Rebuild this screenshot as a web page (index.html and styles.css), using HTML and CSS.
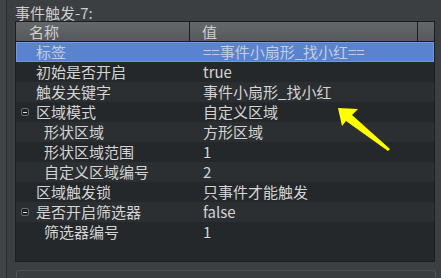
FILE: index.html
```html
<!DOCTYPE html>
<html lang="zh-CN">

<head>
    <meta charset="UTF-8">
    <title>属性</title>
    <link rel="stylesheet" href="styles.css">
</head>

<body>
    <div class="page">
        <div class="edge"></div>
        <div class="main">
            <div class="group_title">事件触发-7:</div>
            <div class="grid">
                <div class="head">
                    <div class="hc name">名称</div>
                    <div class="hc value">值</div>
                    <div class="hc spare"></div>
                </div>
                <div class="row selected">
                    <div class="cell name">标签</div>
                    <div class="cell value">==事件小扇形_找小红==</div>
                </div>
                <div class="row dark">
                    <div class="cell name">初始是否开启</div>
                    <div class="cell value">true</div>
                </div>
                <div class="row light">
                    <div class="cell name">触发关键字</div>
                    <div class="cell value">事件小扇形_找小红</div>
                </div>
                <div class="row dark">
                    <div class="cell name branch"><span class="minus"></span>区域模式</div>
                    <div class="cell value">自定义区域</div>
                </div>
                <div class="row light">
                    <div class="cell name child">形状区域</div>
                    <div class="cell value">方形区域</div>
                </div>
                <div class="row dark">
                    <div class="cell name child">形状区域范围</div>
                    <div class="cell value">1</div>
                </div>
                <div class="row light">
                    <div class="cell name child">自定义区域编号</div>
                    <div class="cell value">2</div>
                </div>
                <div class="row dark">
                    <div class="cell name">区域触发锁</div>
                    <div class="cell value">只事件才能触发</div>
                </div>
                <div class="row light">
                    <div class="cell name branch"><span class="minus"></span>是否开启筛选器</div>
                    <div class="cell value">false</div>
                </div>
                <div class="row dark">
                    <div class="cell name child">筛选器编号</div>
                    <div class="cell value">1</div>
                </div>
                <div class="filler"></div>

                <!-- annotation arrow drawn over the grid -->
                <svg class="arrow" width="60" height="50" viewBox="0 0 60 50">
                    <polygon points="2,2 22,3 16,9 54,43 52,45 10,15 6,20" fill="#ffff00" />
                </svg>
            </div>
            <div class="next_panel"></div>
        </div>
    </div>
</body>

</html>
```

FILE: styles.css
```css
body {
    margin: 0;
    background: #3c3f41;
    font-family: "Noto Sans CJK SC", "DejaVu Sans", sans-serif;
    font-size: 15px;
    color: #d4d4d4;
    overflow: hidden;
}

.page {
    display: flex;
    height: 278px;
    overflow: hidden;
}

.edge {
    width: 6px;
    background: #414446;
    border-right: 1px solid #2a2c2e;
}

.main {
    flex: 1;
    padding-left: 8px;
}

.group_title {
    height: 21px;
    line-height: 26px;
    color: #cdcdcd;
}

.grid {
    position: relative;
    width: 418px;
    border: 1px solid #1c1e20;
    background: #25282a;
}

.head {
    display: flex;
    height: 19px;
    border-bottom: 1px solid #1c1e20;
    background: linear-gradient(#65686b, #56595c);
    color: #cfcfcf;
}

.hc {
    line-height: 19px;
}

.hc.name {
    width: 160px;
    padding-left: 13px;
    border-right: 1px solid #1c1e20;
}

.hc.value {
    width: 215px;
    padding-left: 12px;
    border-right: 1px solid #1c1e20;
}

.hc.spare {
    flex: 1;
}

.row {
    display: flex;
    height: 20px;
    line-height: 20px;
}

.row.dark {
    background: #25282a;
}

.row.light {
    background: #2c2f31;
}

.row.selected {
    box-sizing: border-box;
    background: #5a83cf;
    border: 1px solid #7198dc;
    line-height: 18px;
    color: #c3cde0;
}

.cell.name {
    width: 154px;
    padding-left: 20px;
    display: flex;
    align-items: center;
}

.row.selected .cell.name {
    padding-left: 19px;
}

.cell.name.child {
    padding-left: 28px;
    width: 146px;
}

.cell.name.branch {
    padding-left: 5px;
    width: 169px;
}

.minus {
    box-sizing: border-box;
    width: 8px;
    height: 8px;
    margin-right: 7px;
    border: 1px solid #6a6d70;
    border-radius: 2px;
    background: #1e2022;
    display: flex;
    align-items: center;
    justify-content: center;
}

.minus::after {
    content: "";
    width: 4px;
    height: 1px;
    background: #e0e0e0;
}

.cell.value {
    padding-left: 13px;
}

.filler {
    height: 19px;
    background: #25282a;
}

.arrow {
    position: absolute;
    left: 320px;
    top: 84px;
}

.next_panel {
    margin: 8px 5px 0 1px;
    height: 10px;
    border: 1px solid #505356;
    border-bottom: none;
    border-radius: 4px 4px 0 0;
    background: #3a3d3f;
}
```
